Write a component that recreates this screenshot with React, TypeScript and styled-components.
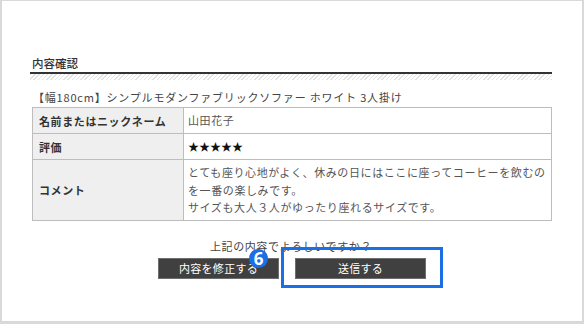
import React from "react";
import styled, { createGlobalStyle } from "styled-components";

const GlobalStyle = createGlobalStyle`
  html, body {
    margin: 0;
    padding: 0;
    background: #d9d9d9;
  }
  body {
    font-family: "Noto Sans CJK JP", "Noto Sans", sans-serif;
  }
`;

type Row = {
  label: string;
  value: string[];
  tall?: boolean;
};

const rows: Row[] = [
  { label: "名前またはニックネーム", value: ["山田花子"] },
  { label: "評価", value: ["★★★★★"] },
  {
    label: "コメント",
    value: [
      "とても座り心地がよく、休みの日にはここに座ってコーヒーを飲むの",
      "を一番の楽しみです。",
      "サイズも大人３人がゆったり座れるサイズです。",
    ],
    tall: true,
  },
];

export default function App() {
  return (
    <>
      <GlobalStyle />
      <Panel>
        <Title>内容確認</Title>
        <Hatch />
        <Product>【幅180cm】シンプルモダンファブリックソファー ホワイト 3人掛け</Product>
        <Table>
          <tbody>
            {rows.map((r) => (
              <tr key={r.label}>
                <Th tall={r.tall}>{r.label}</Th>
                <Td tall={r.tall} stars={r.label === "評価"}>
                  {r.value.map((line, i) => (
                    <div key={i}>{line}</div>
                  ))}
                </Td>
              </tr>
            ))}
          </tbody>
        </Table>
        <Question>上記の内容でよろしいですか？</Question>
        <Buttons>
          <Button w={121}>内容を修正する</Button>
          <Highlight>
            <Button w={131}>送信する</Button>
            <Frame />
            <Badge>6</Badge>
          </Highlight>
        </Buttons>
      </Panel>
    </>
  );
}

const Panel = styled.div`
  box-sizing: border-box;
  margin: 1px 2px 0 2px;
  height: 320px;
  background: #fff;
  padding: 55px 30px 0 28px;
`;

const Title = styled.div`
  font-size: 11.5px;
  line-height: 14px;
  color: #333;
  font-weight: 500;
  padding: 0 0 2px 2px;
  border-bottom: 2px solid #333;
`;

const Hatch = styled.div`
  height: 6px;
  background: repeating-linear-gradient(
    -45deg,
    #e2e2e2 0 1px,
    transparent 1px 3px
  );
`;

const Product = styled.div`
  margin: 10px 0 3px 3px;
  font-size: 11px;
  letter-spacing: 0.8px;
  line-height: 14px;
  color: #444;
  white-space: nowrap;
`;

const Table = styled.table`
  width: calc(100% - 2px);
  margin-left: 2px;
  border-collapse: collapse;
  font-size: 11px;
  letter-spacing: 0.6px;
`;

const Th = styled.th<{ tall?: boolean }>`
  width: 151px;
  box-sizing: border-box;
  height: ${(p) => (p.tall ? 60 : 26)}px;
  padding: 0 6px;
  text-align: left;
  font-weight: 700;
  color: #333;
  background: #efefef;
  border: 1px solid #bdbdbd;
  vertical-align: middle;
`;

const Td = styled.td<{ tall?: boolean; stars?: boolean }>`
  height: ${(p) => (p.tall ? 60 : 26)}px;
  box-sizing: border-box;
  padding: ${(p) => (p.tall ? "4px 4px 3px 4px" : "0 4px")};
  color: ${(p) => (p.stars ? "#111" : "#555")};
  letter-spacing: ${(p) => (p.stars ? "0" : "0.6px")};
  line-height: 17.5px;
  border: 1px solid #bdbdbd;
  vertical-align: middle;
  white-space: nowrap;
`;

const Question = styled.div`
  margin-top: 18px;
  text-align: center;
  font-size: 11px;
  letter-spacing: 0.6px;
  line-height: 14px;
  color: #444;
`;

const Buttons = styled.div`
  margin-top: 5px;
  display: flex;
  justify-content: center;
  gap: 16px;
  padding-left: 2px;
`;

const Button = styled.button<{ w: number }>`
  box-sizing: border-box;
  width: ${(p) => p.w}px;
  height: 21px;
  padding: 0;
  background: #404040;
  border: 1px solid #6e6e6e;
  color: #fff;
  font-family: "Noto Sans CJK JP", "Noto Sans", sans-serif;
  font-size: 11px;
  letter-spacing: 0.3px;
`;

const Highlight = styled.div`
  position: relative;
  display: flex;
`;

const Frame = styled.div`
  position: absolute;
  left: -14px;
  right: -17px;
  top: -11px;
  bottom: -9px;
  border: 3px solid #1a6fe6;
  pointer-events: none;
`;

const Badge = styled.div`
  position: absolute;
  left: -46px;
  top: -9px;
  width: 19px;
  height: 19px;
  border-radius: 50%;
  background: #1a6fe6;
  color: #fff;
  font-family: "Noto Sans", sans-serif;
  font-weight: 700;
  font-size: 17px;
  line-height: 19px;
  text-align: center;
`;
